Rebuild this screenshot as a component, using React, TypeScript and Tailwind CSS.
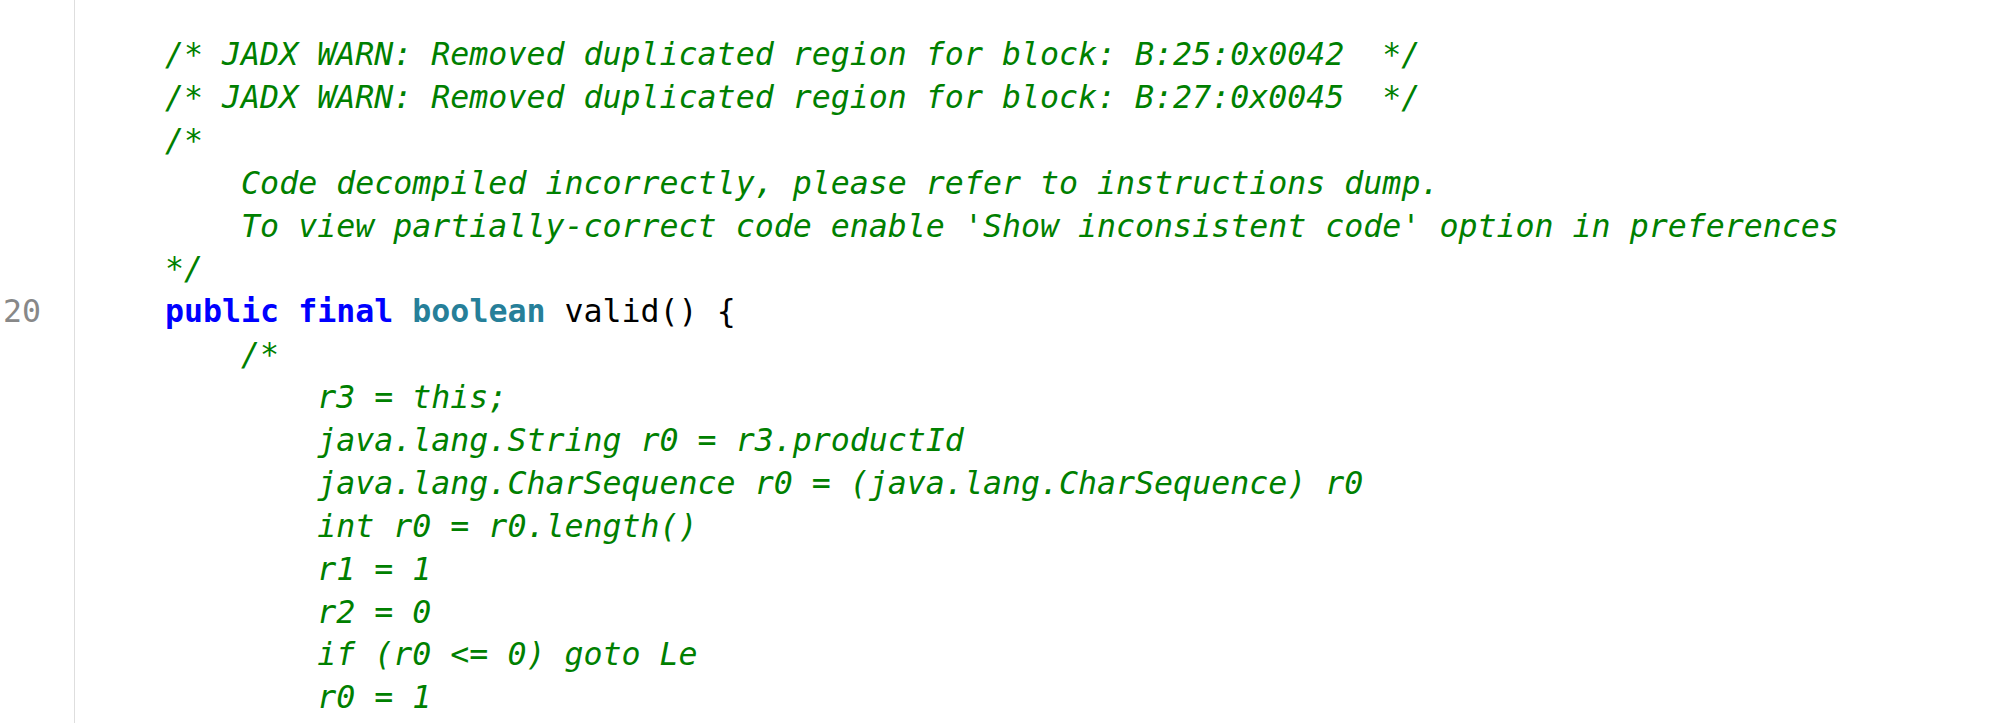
const green = 'text-[#008000] italic'

type Tok = { t: string; c?: string }

const lines: { n?: number; indent: number; toks: Tok[] }[] = [
  { indent: 0, toks: [{ t: '/* JADX WARN: Removed duplicated region for block: B:25:0x0042  */', c: green }] },
  { indent: 0, toks: [{ t: '/* JADX WARN: Removed duplicated region for block: B:27:0x0045  */', c: green }] },
  { indent: 0, toks: [{ t: '/*', c: green }] },
  { indent: 4, toks: [{ t: 'Code decompiled incorrectly, please refer to instructions dump.', c: green }] },
  { indent: 4, toks: [{ t: "To view partially-correct code enable 'Show inconsistent code' option in preferences", c: green }] },
  { indent: 0, toks: [{ t: '*/', c: green }] },
  {
    n: 20,
    indent: 0,
    toks: [
      { t: 'public', c: 'text-[#0000ff] font-bold' },
      { t: ' ' },
      { t: 'final', c: 'text-[#0000ff] font-bold' },
      { t: ' ' },
      { t: 'boolean', c: 'text-[#267f99] font-bold' },
      { t: ' valid() {', c: 'text-[#000000]' },
    ],
  },
  { indent: 4, toks: [{ t: '/*', c: green }] },
  { indent: 8, toks: [{ t: 'r3 = this;', c: green }] },
  { indent: 8, toks: [{ t: 'java.lang.String r0 = r3.productId', c: green }] },
  { indent: 8, toks: [{ t: 'java.lang.CharSequence r0 = (java.lang.CharSequence) r0', c: green }] },
  { indent: 8, toks: [{ t: 'int r0 = r0.length()', c: green }] },
  { indent: 8, toks: [{ t: 'r1 = 1', c: green }] },
  { indent: 8, toks: [{ t: 'r2 = 0', c: green }] },
  { indent: 8, toks: [{ t: 'if (r0 <= 0) goto Le', c: green }] },
  { indent: 8, toks: [{ t: 'r0 = 1', c: green }] },
]

export default function App() {
  return (
    <div className="h-[723px] w-full overflow-hidden bg-white font-['DejaVu_Sans_Mono',monospace] text-[31.6px] leading-[42.9px] whitespace-pre">
      <div className="flex h-full">
        {/* gutter */}
        <div className="w-[75px] shrink-0 border-r border-[#dedede] pt-[33px] text-[#888888]">
          {lines.map((l, i) => (
            <div key={i} className="h-[42.9px] pl-[3px]">
              {l.n ?? ''}
            </div>
          ))}
        </div>

        {/* code */}
        <div className="flex-1 pt-[33px] pl-[90px]">
          {lines.map((l, i) => (
            <div key={i} className="h-[42.9px]">
              {' '.repeat(l.indent)}
              {l.toks.map((tk, j) => (
                <span key={j} className={tk.c}>
                  {tk.t}
                </span>
              ))}
            </div>
          ))}
        </div>
      </div>
    </div>
  )
}
